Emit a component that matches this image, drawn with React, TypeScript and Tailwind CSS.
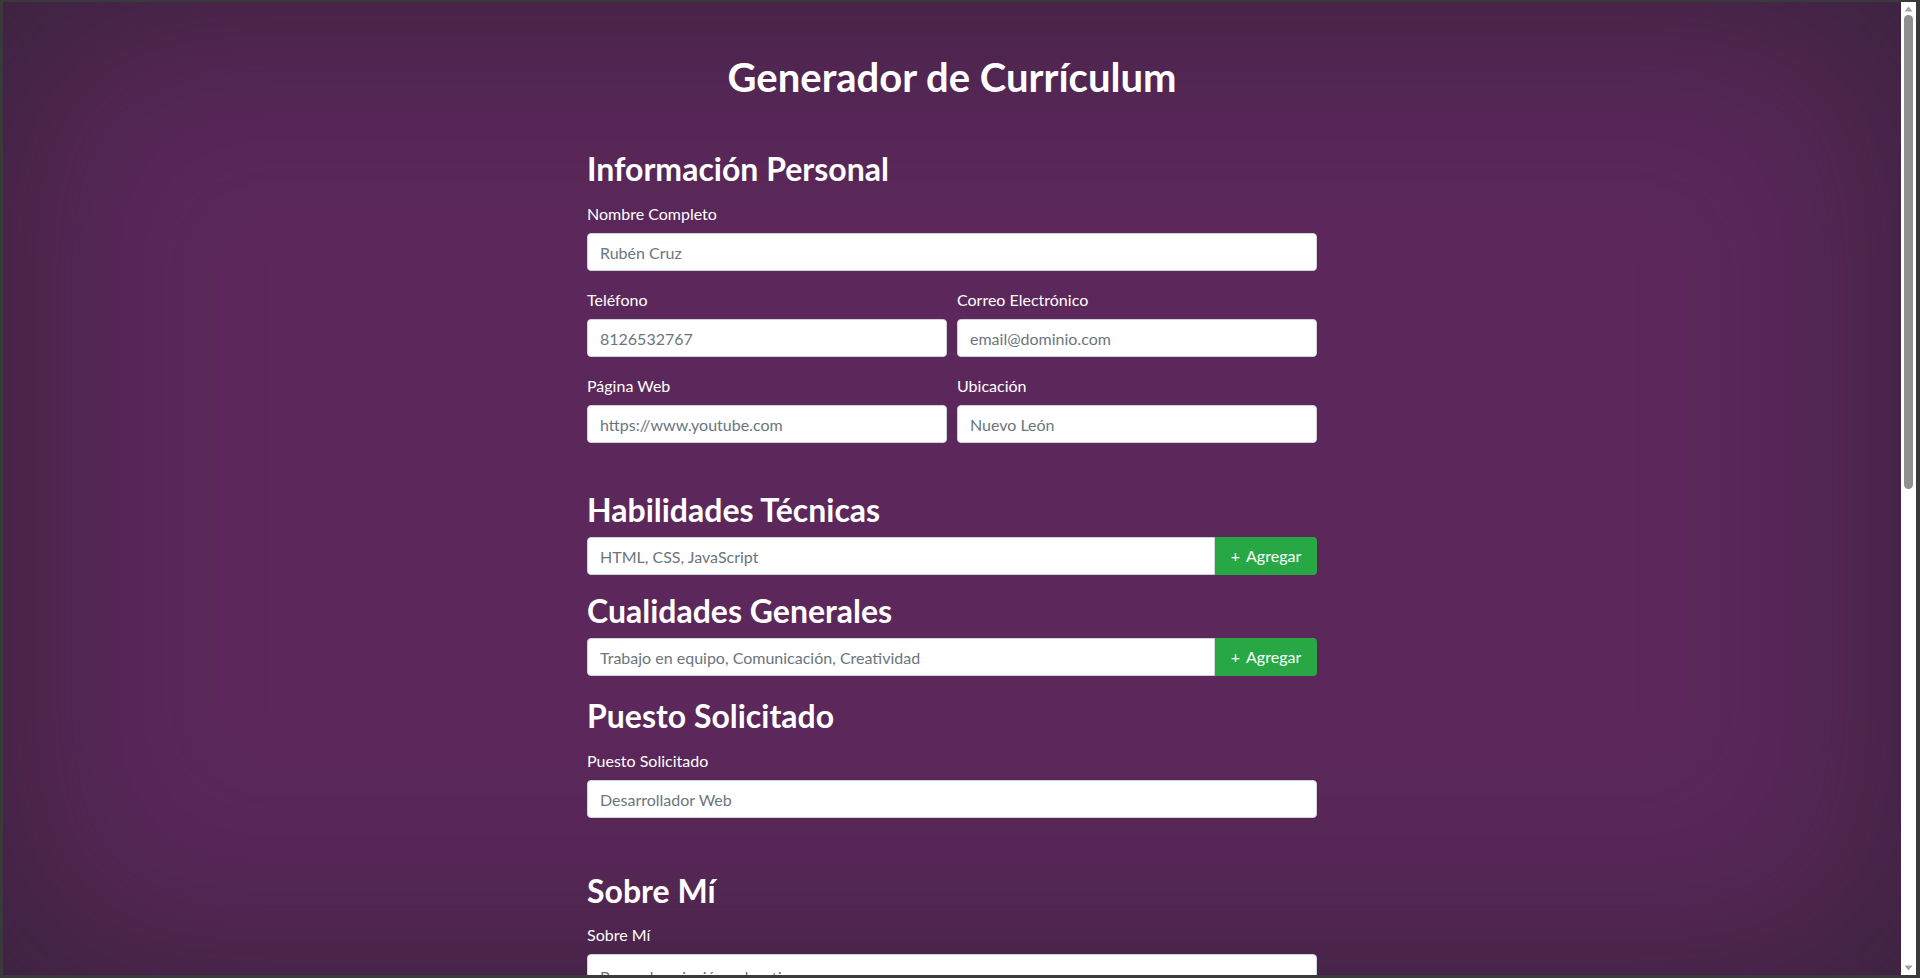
import { useState } from "react";

const inputClass = "w-full h-[38px] bg-white border border-[#ced4da] rounded-[4px] px-3 text-base text-[#495057] placeholder-[#6c757d] focus:outline-none";
const labelClass = "block text-base leading-[19px] text-white mb-[10px]";
const h2Class = "text-[32px] leading-[38px] font-bold text-white";
const textareaClass = "w-full bg-white border border-[#ced4da] rounded-[4px] px-3 py-[10px] text-base text-[#495057] placeholder-[#6c757d] focus:outline-none resize-y";

function Campo({ label, placeholder, type = "text" }: { label: string; placeholder: string; type?: string }) {
  return (
    <div className="mb-[19px]">
      <label className={labelClass}>{label}</label>
      <input type={type} className={inputClass} placeholder={placeholder} />
    </div>
  );
}

function ListaInput({ placeholder, items, onAdd }: { placeholder: string; items: string[]; onAdd: (v: string) => void }) {
  const [value, setValue] = useState("");
  return (
    <div>
      <div className="flex">
        <input
          value={value}
          onChange={e => setValue(e.target.value)}
          className="flex-1 h-[38px] bg-white border border-[#ced4da] rounded-l-[4px] px-3 text-base text-[#495057] placeholder-[#6c757d] focus:outline-none"
          placeholder={placeholder}
        />
        <button
          type="button"
          onClick={() => { if (value.trim()) { onAdd(value.trim()); setValue(""); } }}
          className="w-[102px] h-[38px] bg-[#28a745] hover:bg-[#218838] text-white text-base rounded-r-[4px] flex items-center justify-center gap-[6px]"
        >
          <span>+</span>
          <span>Agregar</span>
        </button>
      </div>
      {items.length > 0 && (
        <div className="flex flex-wrap gap-2 mt-2">
          {items.map(i => (
            <span key={i} className="bg-white/15 text-white text-sm px-3 py-1 rounded-full">{i}</span>
          ))}
        </div>
      )}
    </div>
  );
}

export default function App() {
  const [habilidades, setHabilidades] = useState<string[]>([]);
  const [cualidades, setCualidades] = useState<string[]>([]);

  return (
    <div className="h-screen flex bg-[#3a3a3a] border-t-2 border-l-[3px] border-r-[4px] border-b-[3px] border-[#3a3a3a] font-['Lato',sans-serif]">
      <div className="flex-1 overflow-y-scroll [scrollbar-width:none] bg-[#5c285b] shadow-[inset_0_0_220px_rgba(20,30,30,0.55)]">
        <div className="w-[730px] mx-auto pt-[51px] pb-24">
          <h1 className="text-[40px] leading-[48px] font-bold text-white text-center mb-[49px]">Generador de Currículum</h1>

          {/* Información personal */}
          <section className="flex flex-col mb-[29px]">
            <h2 className={`${h2Class} mb-4`}>Información Personal</h2>
            <Campo label="Nombre Completo" placeholder="Rubén Cruz" />
            <div className="grid grid-cols-2 gap-x-[10px]">
              <Campo label="Teléfono" placeholder="8126532767" type="tel" />
              <Campo label="Correo Electrónico" placeholder="email@dominio.com" type="email" />
              <Campo label="Página Web" placeholder="https://www.youtube.com" />
              <Campo label="Ubicación" placeholder="Nuevo León" />
            </div>
          </section>

          {/* Habilidades */}
          <section className="flex flex-col mb-[17px]">
            <h2 className={`${h2Class} mb-[8px]`}>Habilidades Técnicas</h2>
            <ListaInput placeholder="HTML, CSS, JavaScript" items={habilidades} onAdd={v => setHabilidades(h => [...h, v])} />
          </section>

          <section className="flex flex-col mb-[21px]">
            <h2 className={`${h2Class} mb-[8px]`}>Cualidades Generales</h2>
            <ListaInput placeholder="Trabajo en equipo, Comunicación, Creatividad" items={cualidades} onAdd={v => setCualidades(c => [...c, v])} />
          </section>

          <section className="flex flex-col mb-[35px]">
            <h2 className={`${h2Class} mb-4`}>Puesto Solicitado</h2>
            <Campo label="Puesto Solicitado" placeholder="Desarrollador Web" />
          </section>

          <section className="flex flex-col mb-[35px]">
            <h2 className={`${h2Class} mb-[15px]`}>Sobre Mí</h2>
            <div className="mb-[19px]">
              <label className={labelClass}>Sobre Mí</label>
              <textarea rows={4} className={textareaClass} placeholder="Breve descripción sobre ti" />
            </div>
          </section>

          <section className="flex flex-col mb-[35px]">
            <h2 className={`${h2Class} mb-4`}>Experiencia Laboral</h2>
            <Campo label="Empresa" placeholder="Nombre de la empresa" />
            <div className="grid grid-cols-2 gap-x-[10px]">
              <Campo label="Cargo" placeholder="Desarrollador Frontend" />
              <Campo label="Periodo" placeholder="2020 - 2023" />
            </div>
            <div className="mb-[19px]">
              <label className={labelClass}>Descripción</label>
              <textarea rows={3} className={textareaClass} placeholder="Responsabilidades y logros" />
            </div>
          </section>

          <section className="flex flex-col mb-[35px]">
            <h2 className={`${h2Class} mb-4`}>Educación</h2>
            <Campo label="Institución" placeholder="Universidad Autónoma de Nuevo León" />
            <div className="grid grid-cols-2 gap-x-[10px]">
              <Campo label="Título" placeholder="Ingeniería en Software" />
              <Campo label="Periodo" placeholder="2016 - 2020" />
            </div>
          </section>

          <button type="button" className="w-full h-[46px] bg-[#28a745] hover:bg-[#218838] text-white text-lg font-bold rounded-[4px]">
            Generar Currículum
          </button>
        </div>
      </div>

      {/* barra de desplazamiento */}
      <div className="w-[15px] bg-white flex flex-col items-center py-[2px]">
        <svg width="9" height="6" viewBox="0 0 9 6" className="mt-[2px] mb-[3px]"><path d="M4.5 0.5 L8.5 5.5 H0.5 Z" fill="#a3a3a3" /></svg>
        <div className="w-[9px] h-[474px] bg-[#8f8f8f] rounded-full" />
        <div className="flex-1" />
        <svg width="9" height="6" viewBox="0 0 9 6" className="mb-[2px]"><path d="M4.5 5.5 L8.5 0.5 H0.5 Z" fill="#a3a3a3" /></svg>
      </div>
    </div>
  );
}
